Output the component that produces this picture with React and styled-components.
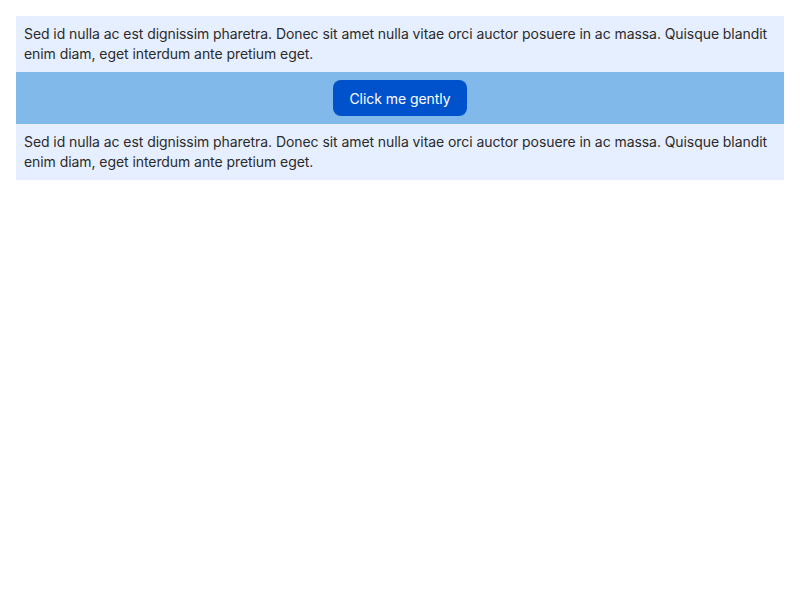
import styled, { createGlobalStyle } from "styled-components";

const GlobalStyle = createGlobalStyle`
  body {
    margin: 0;
    padding: 16px;
    font-family: "Inter", "Liberation Sans", sans-serif;
    background: #ffffff;
  }
`;

const Stack = styled.div`
  display: flex;
  flex-direction: column;
`;

const Paragraph = styled.p`
  margin: 0;
  padding: 8px;
  font-size: 14px;
  line-height: 20px;
  letter-spacing: -0.07px;
  color: #2b2b2b;
  background: #e6efff;
`;

const ButtonRow = styled.div`
  display: flex;
  justify-content: center;
  padding: 8px;
  background: #80b9ea;
`;

const Button = styled.button`
  height: 36px;
  padding: 0 16px;
  border: none;
  border-radius: 8px;
  background: #0052cc;
  color: #ffffff;
  font-family: inherit;
  font-size: 14px;
  letter-spacing: -0.05px;
  cursor: pointer;
`;

const text =
  "Sed id nulla ac est dignissim pharetra. Donec sit amet nulla vitae orci auctor posuere in ac massa. Quisque blandit enim diam, eget interdum ante pretium eget.";

export default function App() {
  return (
    <>
      <GlobalStyle />
      <Stack>
        <Paragraph>{text}</Paragraph>
        <ButtonRow>
          <Button>Click me gently</Button>
        </ButtonRow>
        <Paragraph>{text}</Paragraph>
      </Stack>
    </>
  );
}
